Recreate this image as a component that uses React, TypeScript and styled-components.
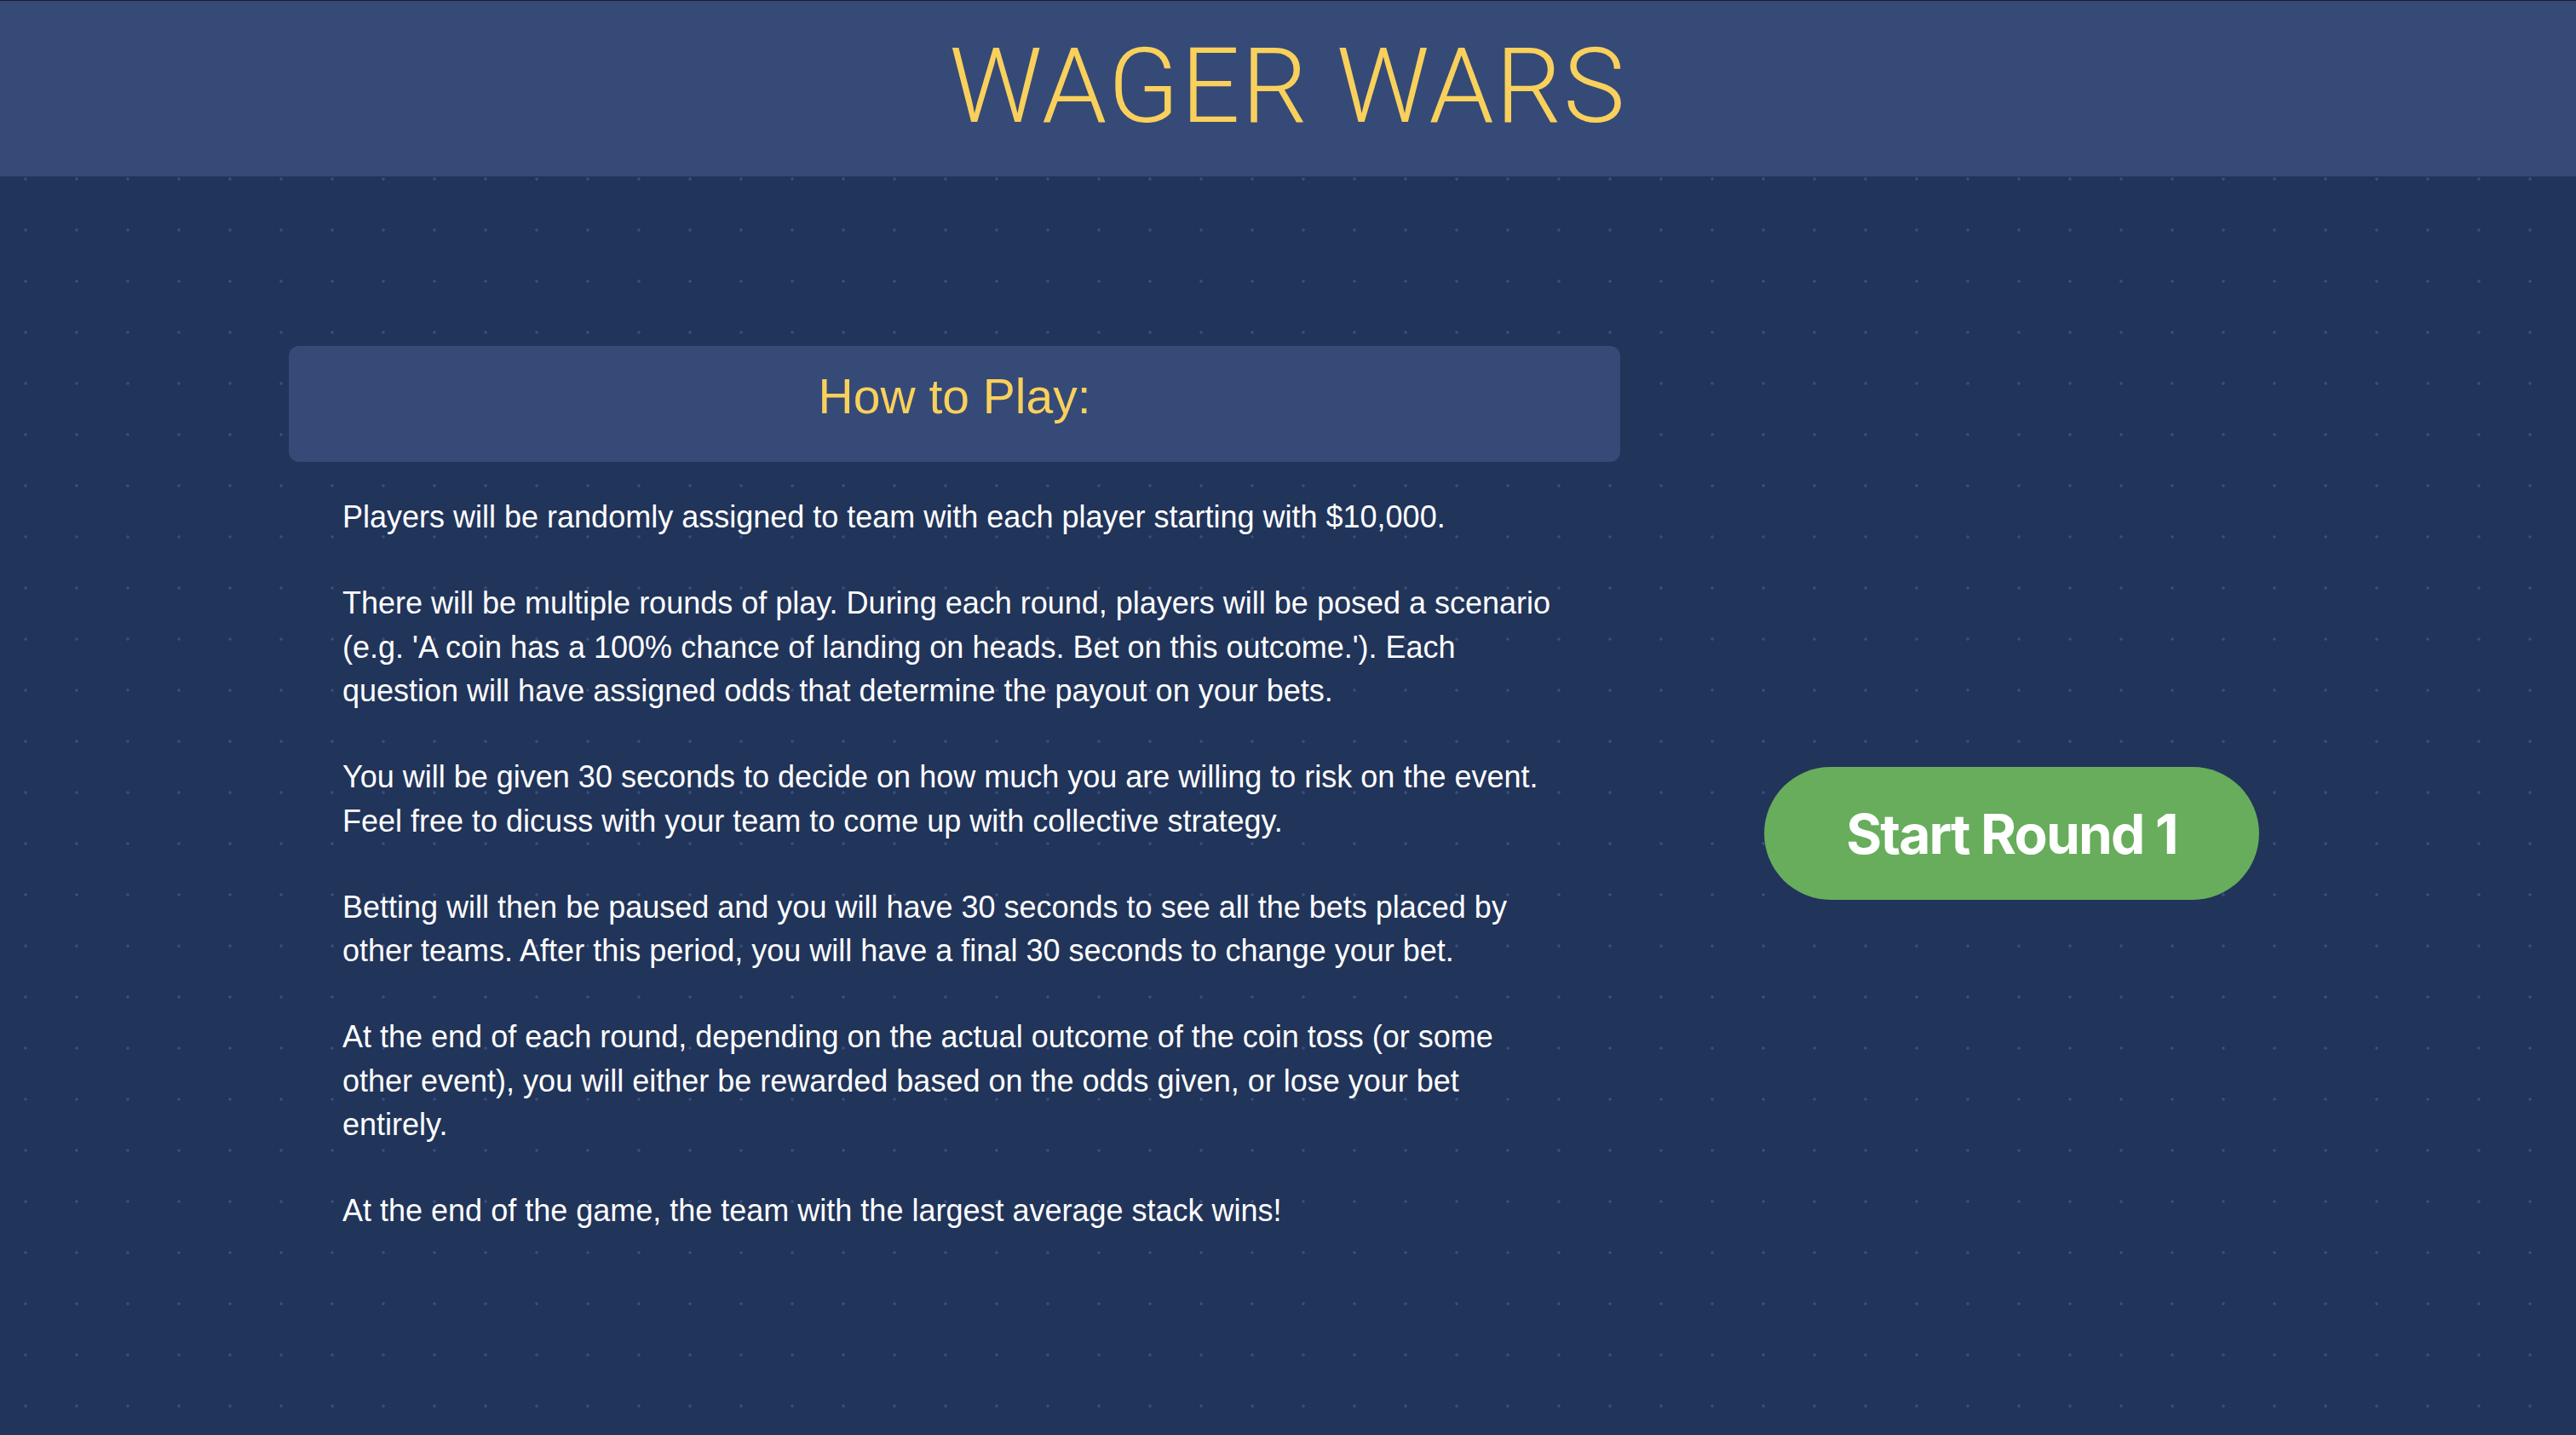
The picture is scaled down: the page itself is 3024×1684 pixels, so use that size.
import React from "react";
import styled, { createGlobalStyle } from "styled-components";

const GlobalStyle = createGlobalStyle`
  html, body {
    margin: 0;
    padding: 0;
    min-height: 100%;
  }
  body {
    background-color: #21345a;
    background-image: radial-gradient(circle at 30px 30px, #3a4d7e 1.4px, transparent 2.1px);
    background-size: 60px 60px;
    font-family: "Liberation Sans", Arial, Helvetica, sans-serif;
    min-height: 100vh;
  }
`;

const Page = styled.div`
  min-height: 100vh;
  display: flex;
  flex-direction: column;
`;

const Header = styled.header`
  background: #354a77;
  border-top: 1px solid #1b1d22;
  display: flex;
  justify-content: center;
  padding-top: 40px;
  box-sizing: content-box;
  height: 166px;
`;

const Title = styled.h1`
  margin: 0;
  font-family: Roboto, "Liberation Sans", sans-serif;
  font-weight: 300;
  font-size: 122px;
  line-height: 122px;
  color: #f9d05b;
  letter-spacing: 2px;
`;

const Main = styled.main`
  display: flex;
  align-items: flex-start;
  gap: 169px;
  padding: 199px 0 0 339px;
`;

const RulesColumn = styled.section`
  width: 1563px;
  flex: none;
`;

const HeadingBar = styled.div`
  background: #364a78;
  border-radius: 12px;
  padding: 31px 0 49px;
  display: flex;
  justify-content: center;
`;

const Heading = styled.h2`
  margin: 0;
  font-family: "Liberation Sans", Arial, sans-serif;
  font-weight: 400;
  font-size: 57px;
  line-height: 56px;
  color: #f9d05b;
`;

const Rules = styled.div`
  margin-top: 39px;
  padding: 0 0 0 63px;
  width: 1430px;
`;

const Rule = styled.p`
  margin: 0 0 49.5px;
  font-size: 36px;
  line-height: 51.5px;
  color: #ffffff;
`;

const ActionColumn = styled.div`
  padding-top: 494px;
  flex: none;
`;

const StartButton = styled.button`
  width: 581px;
  height: 156px;
  border: none;
  border-radius: 78px;
  background: #67ad5c;
  color: #ffffff;
  font-family: Inter, "Open Sans", sans-serif;
  font-weight: 700;
  font-size: 64px;
  letter-spacing: -1.8px;
  cursor: pointer;
  display: flex;
  align-items: center;
  justify-content: center;
  padding: 0;
`;

const rules = [
  "Players will be randomly assigned to team with each player starting with $10,000.",
  "There will be multiple rounds of play. During each round, players will be posed a scenario (e.g. 'A coin has a 100% chance of landing on heads. Bet on this outcome.'). Each question will have assigned odds that determine the payout on your bets.",
  "You will be given 30 seconds to decide on how much you are willing to risk on the event. Feel free to dicuss with your team to come up with collective strategy.",
  "Betting will then be paused and you will have 30 seconds to see all the bets placed by other teams. After this period, you will have a final 30 seconds to change your bet.",
  "At the end of each round, depending on the actual outcome of the coin toss (or some other event), you will either be rewarded based on the odds given, or lose your bet entirely.",
  "At the end of the game, the team with the largest average stack wins!",
];

export default function App() {
  return (
    <>
      <GlobalStyle />
      <Page>
        <Header>
          <Title>WAGER WARS</Title>
        </Header>
        <Main>
          <RulesColumn>
            <HeadingBar>
              <Heading>How to Play:</Heading>
            </HeadingBar>
            <Rules>
              {rules.map((r, i) => (
                <Rule key={i}>{r}</Rule>
              ))}
            </Rules>
          </RulesColumn>
          <ActionColumn>
            <StartButton>Start Round 1</StartButton>
          </ActionColumn>
        </Main>
      </Page>
    </>
  );
}
